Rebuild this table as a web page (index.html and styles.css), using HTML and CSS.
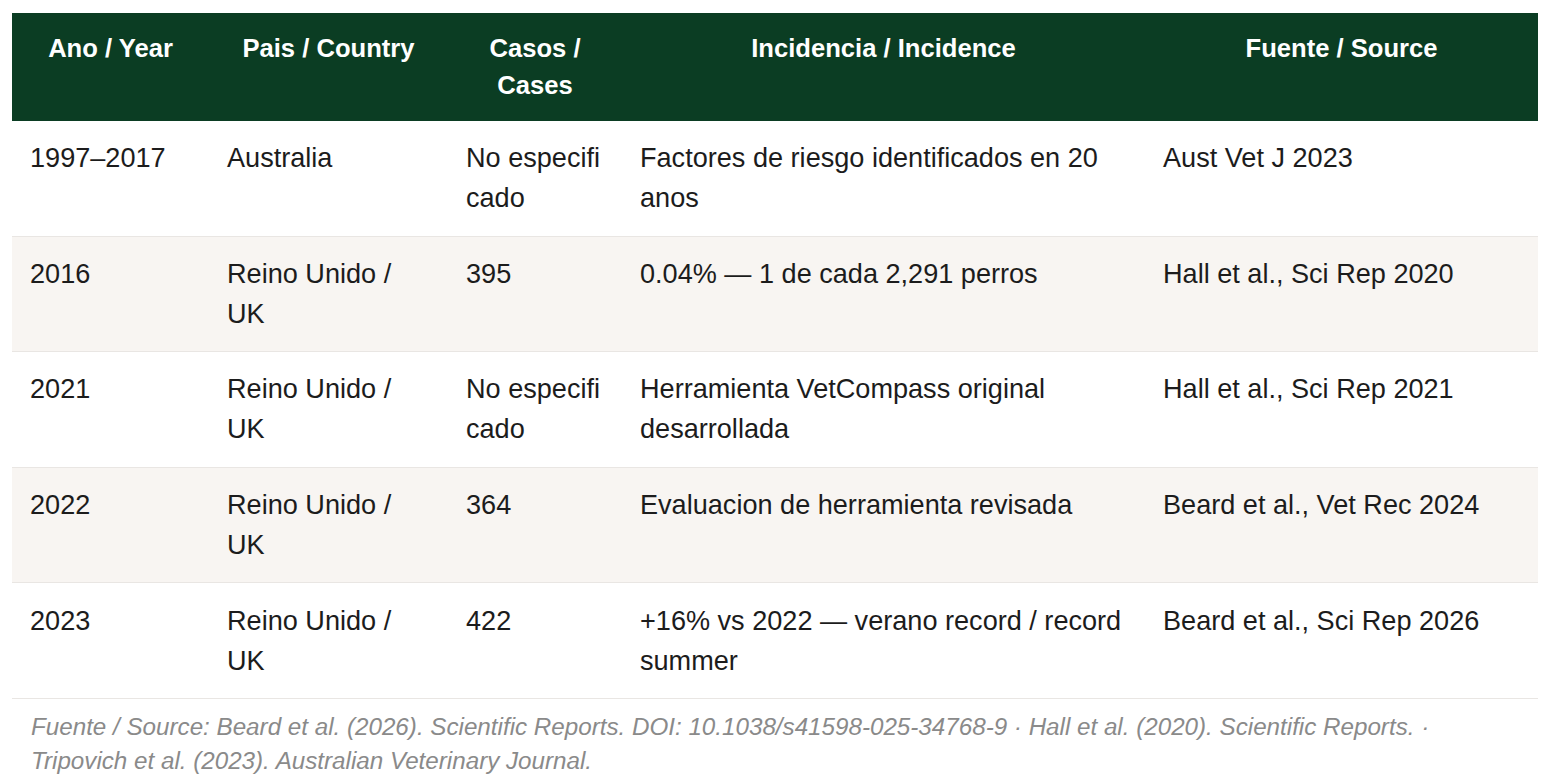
FILE: index.html
```html
<!DOCTYPE html>
<html lang="es">
<head>
<meta charset="utf-8">
<title>Incidencia</title>
<link rel="stylesheet" href="styles.css">
</head>
<body>
<div class="wrap">
<table class="data">
  <colgroup>
    <col class="c1"><col class="c2"><col class="c3"><col class="c4"><col class="c5">
  </colgroup>
  <thead>
    <tr>
      <th>Ano / Year</th>
      <th>Pais / Country</th>
      <th>Casos / Cases</th>
      <th>Incidencia / Incidence</th>
      <th>Fuente / Source</th>
    </tr>
  </thead>
  <tbody>
    <tr>
      <td>1997–2017</td>
      <td>Australia</td>
      <td class="cases">No especificado</td>
      <td>Factores de riesgo identificados en 20 anos</td>
      <td>Aust Vet J 2023</td>
    </tr>
    <tr>
      <td>2016</td>
      <td>Reino Unido / UK</td>
      <td class="cases">395</td>
      <td>0.04% — 1 de cada 2,291 perros</td>
      <td>Hall et al., Sci Rep 2020</td>
    </tr>
    <tr>
      <td>2021</td>
      <td>Reino Unido / UK</td>
      <td class="cases">No especificado</td>
      <td>Herramienta VetCompass original desarrollada</td>
      <td>Hall et al., Sci Rep 2021</td>
    </tr>
    <tr>
      <td>2022</td>
      <td>Reino Unido / UK</td>
      <td class="cases">364</td>
      <td>Evaluacion de herramienta revisada</td>
      <td>Beard et al., Vet Rec 2024</td>
    </tr>
    <tr>
      <td>2023</td>
      <td>Reino Unido / UK</td>
      <td class="cases">422</td>
      <td>+16% vs 2022 — verano record / record summer</td>
      <td>Beard et al., Sci Rep 2026</td>
    </tr>
  </tbody>
</table>
<p class="note">Fuente / Source: Beard et al. (2026). Scientific Reports. DOI: 10.1038/s41598-025-34768-9 · Hall et al. (2020). Scientific Reports. · Tripovich et al. (2023). Australian Veterinary Journal.</p>
</div>
</body>
</html>
```
FILE: styles.css
```css
html, body {
  margin: 0;
  padding: 0;
  background: #ffffff;
}
body {
  font-family: "Liberation Sans", Arial, Helvetica, sans-serif;
  color: #1c1c1c;
}
.wrap {
  padding: 13px 8px 0 12px;
}
.data {
  width: 1526px;
  border-collapse: collapse;
  table-layout: fixed;
  font-size: 27.1px;
  line-height: 40px;
}
.c1 { width: 197px; }
.c2 { width: 239px; }
.c3 { width: 174px; }
.c4 { width: 523px; }
.c5 { width: 393px; }
.data th {
  background: #0b3d23;
  color: #ffffff;
  font-weight: bold;
  font-size: 25.6px;
  line-height: 37px;
  padding: 17px 18px;
  text-align: center;
  vertical-align: top;
}
.data td {
  padding: 17.3px 18px 17.3px 18px;
  vertical-align: top;
  text-align: left;
  border-bottom: 1px solid #e9e6e3;
}
.data tbody tr:nth-child(even) td {
  background: #f8f5f2;
}
.data .cases {
  word-break: break-all;
}
.note {
  margin: 0;
  width: 1490px;
  padding: 11px 18px 0 19px;
  font-size: 24.2px;
  line-height: 34px;
  font-style: italic;
  color: #8a8a8a;
}
```
